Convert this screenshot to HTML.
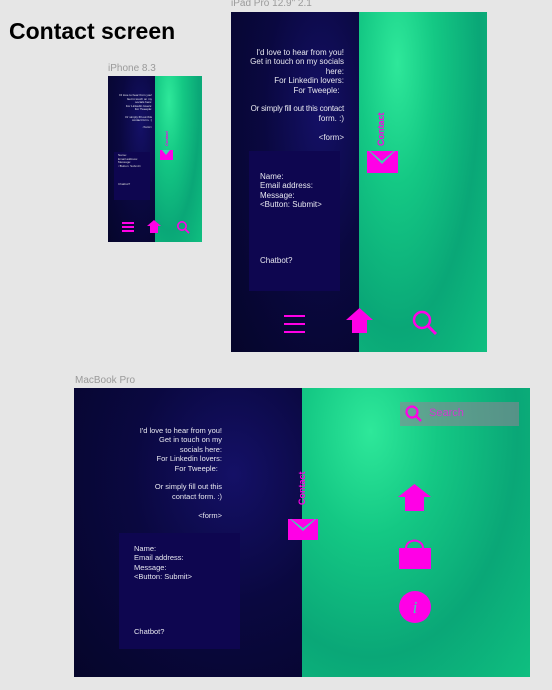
<!DOCTYPE html>
<html><head><style>
*{margin:0;padding:0;box-sizing:border-box}
body{width:552px;height:690px;background:#e6e6e6;position:relative;overflow:hidden;font-family:"Liberation Sans",sans-serif}
.a{position:absolute}
.lbl{color:#9a9a9a;font-size:10px}
.dark{background:radial-gradient(ellipse at 70% 30%,#141066 0%,#0a0840 45%,#05052a 100%)}
.green{background:radial-gradient(ellipse at 30% 15%,#2ee89a 0%,#14c884 30%,#0aa777 65%,#0fbf80 100%)}
.t{color:#e8e8f0;text-align:right}
.box{background:#0e0650}
.ct{color:#ff00e6;font-weight:bold;transform:rotate(-90deg);transform-origin:left top;white-space:nowrap}
</style></head><body>
<div class="a" style="left:9px;top:18px;font-size:23px;font-weight:bold;color:#000">Contact screen</div>

<!-- iPhone -->
<div class="a lbl" style="left:108px;top:63px">iPhone 8.3</div>
<div class="a dark" style="left:108px;top:76px;width:47px;height:166px"></div>
<div class="a green" style="left:155px;top:76px;width:47px;height:166px"></div>
<div class="a t" style="left:110px;top:94px;width:42px;font-size:3px;line-height:3.6px">I'd love to hear from you!<br>Get in touch on my<br>socials here:<br>For Linkedin lovers:<br>For Tweeple:<br><br>Or simply fill out this<br>contact form. :)<br><br>&lt;form&gt;</div>
<div class="a box" style="left:114px;top:152px;width:36px;height:48px"></div>
<div class="a" style="left:118px;top:154px;font-size:3px;line-height:3.6px;color:#ddd">Name:<br>Email address:<br>Message:<br>&lt;Button: Submit&gt;<br><br><br><br><br>Chatbot?</div>
<div class="a ct" style="left:164px;top:146px;font-size:4px">Contact</div>
<div class="a" style="left:160px;top:150px;width:13px;height:10px;background:#ff00e6"></div>
<div class="a" style="left:162px;top:150px;width:0;height:0;border-left:4.5px solid transparent;border-right:4.5px solid transparent;border-top:5px solid #3ad6b0"></div>
<div class="a" style="left:122px;top:222px;width:12px;height:1.5px;background:#ff00e6;box-shadow:0 4px 0 #ff00e6,0 8px 0 #ff00e6"></div>
<svg class="a" style="left:147px;top:219px" width="14" height="14"><path d="M7 1L14 7H11V14H3V7H0Z" fill="#ff00e6"/></svg>
<svg class="a" style="left:176px;top:220px" width="14" height="14"><circle cx="6" cy="6" r="4.2" fill="none" stroke="#ff00e6" stroke-width="1.6"/><path d="M9 9L13 13" stroke="#ff00e6" stroke-width="1.8"/></svg>

<!-- iPad -->
<div class="a lbl" style="left:231px;top:-2px">iPad Pro 12.9" 2.1</div>
<div class="a dark" style="left:231px;top:12px;width:128px;height:340px"></div>
<div class="a green" style="left:359px;top:12px;width:128px;height:340px"></div>
<div class="a t" style="left:240px;top:48px;width:104px;font-size:8px;line-height:9.4px">I'd love to hear from you!<br>Get in touch on my socials<br>here:<br>For Linkedin lovers:<br>For Tweeple:&nbsp;&nbsp;<br><br><span style="letter-spacing:-0.2px">Or simply fill out this contact</span><br>form. :)<br><br>&lt;form&gt;</div>
<div class="a box" style="left:249px;top:151px;width:91px;height:140px"></div>
<div class="a" style="left:260px;top:172px;font-size:8px;line-height:9.4px;color:#e8e8f0">Name:<br>Email address:<br>Message:<br>&lt;Button: Submit&gt;</div>
<div class="a" style="left:260px;top:256px;font-size:8px;color:#e8e8f0">Chatbot?</div>
<div class="a ct" style="left:376px;top:146px;font-size:9px">Contact</div>
<div class="a" style="left:367px;top:151px;width:31px;height:22px;background:#ff00e6"></div>
<div class="a" style="left:369px;top:151px;width:0;height:0;border-left:13.5px solid transparent;border-right:13.5px solid transparent;border-top:13px solid #3ad6b0"></div>
<div class="a" style="left:370px;top:151px;width:0;height:0;border-left:12.5px solid transparent;border-right:12.5px solid transparent;border-top:10px solid #ff00e6"></div>
<div class="a" style="left:284px;top:315px;width:21px;height:2px;background:#ff00e6;box-shadow:0 8px 0 #ff00e6,0 16px 0 #ff00e6"></div>
<svg class="a" style="left:346px;top:307px" width="27" height="26"><path d="M13.5 1L27 13H21V26H6V13H0Z" fill="#ff00e6"/></svg>
<svg class="a" style="left:411px;top:310px" width="28" height="26"><circle cx="11" cy="10" r="8" fill="none" stroke="#ff00e6" stroke-width="2.5"/><path d="M17 16L25 24" stroke="#ff00e6" stroke-width="3"/></svg>

<!-- MacBook -->
<div class="a lbl" style="left:75px;top:375px">MacBook Pro</div>
<div class="a dark" style="left:74px;top:388px;width:228px;height:289px"></div>
<div class="a green" style="left:302px;top:388px;width:228px;height:289px"></div>
<div class="a t" style="left:120px;top:426px;width:102px;font-size:7.5px;line-height:9.4px">I'd love to hear from you!<br>Get in touch on my<br>socials here:<br>For Linkedin lovers:<br>For Tweeple:&nbsp;&nbsp;<br><br>Or simply fill out this<br>contact form. :)<br><br>&lt;form&gt;</div>
<div class="a box" style="left:119px;top:533px;width:121px;height:116px"></div>
<div class="a" style="left:134px;top:544px;font-size:7.5px;line-height:9.4px;color:#e8e8f0">Name:<br>Email address:<br>Message:<br>&lt;Button: Submit&gt;</div>
<div class="a" style="left:134px;top:627px;font-size:7.5px;color:#e8e8f0">Chatbot?</div>
<div class="a ct" style="left:297px;top:505px;font-size:9px">Contact</div>
<div class="a" style="left:288px;top:519px;width:30px;height:21px;background:#ff00e6"></div>
<div class="a" style="left:290px;top:519px;width:0;height:0;border-left:13px solid transparent;border-right:13px solid transparent;border-top:12px solid #3ad6b0"></div>
<div class="a" style="left:291px;top:519px;width:0;height:0;border-left:12px solid transparent;border-right:12px solid transparent;border-top:9px solid #ff00e6"></div>
<div class="a" style="left:400px;top:402px;width:119px;height:24px;background:rgba(150,130,150,0.55)"></div>
<svg class="a" style="left:404px;top:404px" width="20" height="20"><circle cx="8" cy="8" r="5.5" fill="none" stroke="#ff00e6" stroke-width="2.2"/><path d="M12 12L17 17" stroke="#ff00e6" stroke-width="2.4"/></svg>
<div class="a" style="left:429px;top:407px;font-size:11px;color:#d03ad0">Search</div>
<svg class="a" style="left:397px;top:483px" width="35" height="29"><path d="M17.5 1L34 14H27V28H8V14H1Z" fill="#ff00e6"/></svg>
<svg class="a" style="left:398px;top:538px" width="33" height="31"><path d="M8 10A8 7 0 0 1 25 10" fill="none" stroke="#ff00e6" stroke-width="2"/><rect x="1" y="10" width="32" height="21" fill="#ff00e6"/></svg>
<svg class="a" style="left:398px;top:591px" width="34" height="32"><circle cx="17" cy="16" r="16" fill="#ff00e6"/><text x="17" y="22" text-anchor="middle" font-family="Liberation Serif,serif" font-style="italic" font-size="17" fill="#3ad6b0">i</text></svg>
</body></html>
